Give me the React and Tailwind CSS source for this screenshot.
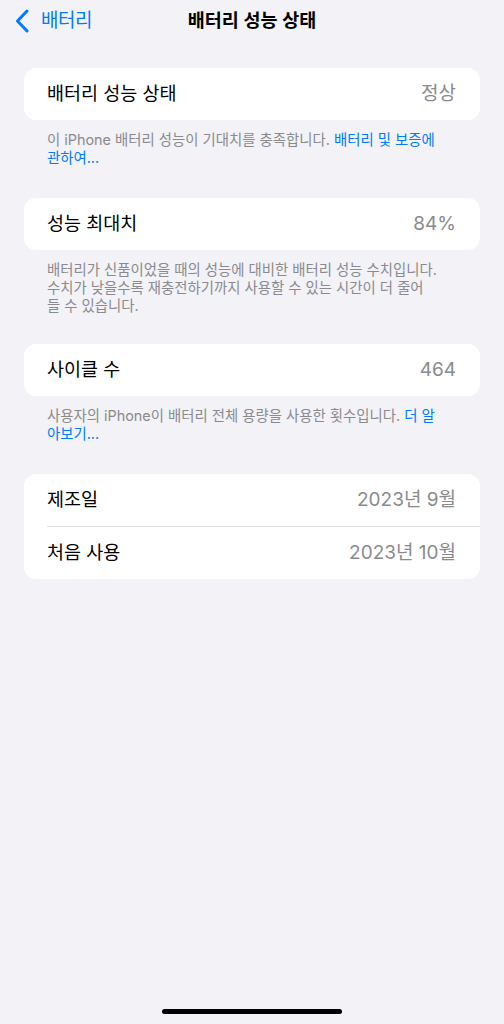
import React from 'react';

const font = { fontFamily: 'Inter, "Noto Sans CJK KR", sans-serif' };

function Row({ label, value, divider }) {
  return (
    <div className="flex flex-col">
      <div className="h-[52px] flex items-center justify-between pl-[23px] pr-[24px]">
        <span className="text-[18.5px] text-black">{label}</span>
        <span className="text-[19px] text-[#8a8a8e]">{value}</span>
      </div>
      {divider && <div className="ml-[23px] h-px bg-[#e2e2e6]" />}
    </div>
  );
}

function Card({ children }) {
  return <div className="bg-white rounded-[12px] overflow-hidden">{children}</div>;
}

function Footer({ lines, mb }) {
  return (
    <div className={`pl-[23px] pt-[11px] text-[14.4px] leading-[18px] text-[#8a8a8e] ${mb}`}>
      {lines.map((l, i) => (
        <div key={i} className="whitespace-nowrap">{l}</div>
      ))}
    </div>
  );
}

export default function App() {
  return (
    <div className="min-h-screen bg-[#f2f2f7] flex flex-col" style={font}>
      {/* nav */}
      <div className="h-[42px] grid grid-cols-[1fr_auto_1fr] items-center">
        <div className="flex items-center pl-[15px] gap-[12px] text-[#007aff]">
          <svg width="14" height="24" viewBox="0 0 14 24" fill="none">
            <path d="M12 2 L2.5 12 L12 22" stroke="#007aff" strokeWidth="3" strokeLinecap="round" strokeLinejoin="round" />
          </svg>
          <span className="text-[19px] tracking-[-0.5px]">배터리</span>
        </div>
        <div className="text-[18.5px] font-semibold text-black">배터리 성능 상태</div>
        <div />
      </div>

      <div className="px-[24px] pt-[26px] flex flex-col">
        <Card>
          <Row label="배터리 성능 상태" value="정상" />
        </Card>
        <Footer
          mb="mb-[31px]"
          lines={[
            <>이 iPhone 배터리 성능이 기대치를 충족합니다. <span className="text-[#007aff]">배터리 및 보증에</span></>,
            <span className="text-[#007aff]">관하여...</span>,
          ]}
        />

        <Card>
          <Row label="성능 최대치" value="84%" />
        </Card>
        <Footer
          mb="mb-[29px]"
          lines={[
            '배터리가 신품이었을 때의 성능에 대비한 배터리 성능 수치입니다.',
            '수치가 낮을수록 재충전하기까지 사용할 수 있는 시간이 더 줄어',
            '들 수 있습니다.',
          ]}
        />

        <Card>
          <Row label="사이클 수" value="464" />
        </Card>
        <Footer
          mb="mb-[31px]"
          lines={[
            <>사용자의 iPhone이 배터리 전체 용량을 사용한 횟수입니다. <span className="text-[#007aff]">더 알</span></>,
            <span className="text-[#007aff]">아보기...</span>,
          ]}
        />

        <Card>
          <Row label="제조일" value="2023년 9월" divider />
          <Row label="처음 사용" value="2023년 10월" />
        </Card>
      </div>

      <div className="mt-auto mb-[10px] flex justify-center">
        <div className="w-[180px] h-[5px] rounded-full bg-black" />
      </div>
    </div>
  );
}
